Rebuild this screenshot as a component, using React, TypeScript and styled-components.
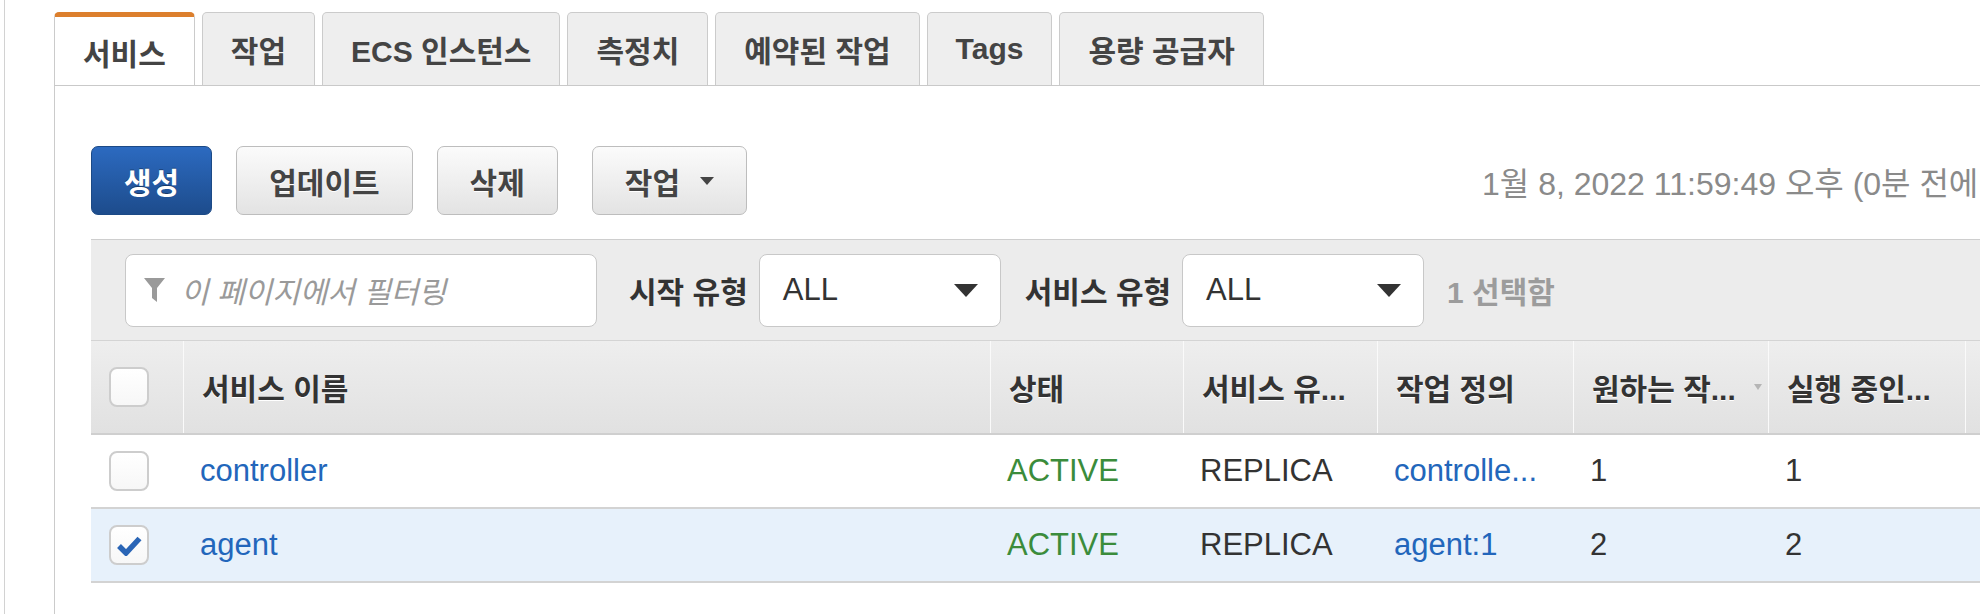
import React from "react";
import styled, { createGlobalStyle } from "styled-components";

const GlobalStyle = createGlobalStyle`
  html, body {
    margin: 0;
    padding: 0;
    background: #fff;
    overflow: hidden;
  }
  body {
    font-family: "Liberation Sans", "Noto Sans CJK KR", sans-serif;
    color: #333;
  }
  * {
    box-sizing: border-box;
  }
`;

const COLUMNS = "92px 807px 193px 194px 196px 195px 197px 240px";

const tabs = ["서비스", "작업", "ECS 인스턴스", "측정치", "예약된 작업", "Tags", "용량 공급자"];

const headers = ["서비스 이름", "상태", "서비스 유...", "작업 정의", "원하는 작...", "실행 중인...", ""];

const services = [
  { name: "controller", status: "ACTIVE", type: "REPLICA", taskDef: "controlle...", desired: 1, running: 1, selected: false },
  { name: "agent", status: "ACTIVE", type: "REPLICA", taskDef: "agent:1", desired: 2, running: 2, selected: true },
];

const FunnelIcon = () => (
  <svg width="21" height="24" viewBox="0 0 21 24">
    <path d="M0 0 H21 L13 10 V24 L8 20 V10 Z" fill="#9a9a9a" />
  </svg>
);

const Caret = ({ w, h, color }: { w: number; h: number; color: string }) => (
  <svg width={w} height={h} viewBox={`0 0 ${w} ${h}`}>
    <polygon points={`0,0 ${w},0 ${w / 2},${h}`} fill={color} />
  </svg>
);

const CheckMark = () => (
  <svg width="26" height="21" viewBox="0 0 26 21">
    <path d="M3 11 L10 18 L23.5 3.5" fill="none" stroke="#2a65b6" strokeWidth="5.5" />
  </svg>
);

const App: React.FC = () => {
  return (
    <>
      <GlobalStyle />
      <Page>
        <Frame>
          <TabBar>
            {tabs.map((t, i) => (
              <Tab key={t} $active={i === 0}>
                {t}
              </Tab>
            ))}
          </TabBar>
          <Panel>
            <Toolbar>
              <Button $primary>생성</Button>
              <Button>업데이트</Button>
              <Button>삭제</Button>
              <DropButton>
                작업
                <Caret w={14} h={8} color="#444" />
              </DropButton>
              <Timestamp>1월 8, 2022 11:59:49 오후 (0분 전에 업데이트됨)</Timestamp>
            </Toolbar>

            <FilterBar>
              <FilterInput>
                <FunnelIcon />
                <Placeholder>이 페이지에서 필터링</Placeholder>
              </FilterInput>
              <FilterLabel $gap={32}>시작 유형</FilterLabel>
              <Select>
                <span>ALL</span>
                <Caret w={24} h={13} color="#333" />
              </Select>
              <FilterLabel $gap={24}>서비스 유형</FilterLabel>
              <Select>
                <span>ALL</span>
                <Caret w={24} h={13} color="#333" />
              </Select>
              <SelectedCount>1 선택함</SelectedCount>
            </FilterBar>

            <HeaderRow>
              <HeaderCell $first>
                <Checkbox />
              </HeaderCell>
              {headers.map((h, i) => (
                <HeaderCell key={i}>
                  <HeaderLabel>{h}</HeaderLabel>
                  {i === 4 && <Caret w={8} h={6} color="#b5b5b5" />}
                </HeaderCell>
              ))}
            </HeaderRow>

            {services.map((s) => (
              <Row key={s.name} $selected={s.selected}>
                <Cell $check>
                  <Checkbox>{s.selected && <CheckMark />}</Checkbox>
                </Cell>
                <Cell $tone="link">{s.name}</Cell>
                <Cell $tone="ok">{s.status}</Cell>
                <Cell>{s.type}</Cell>
                <Cell $tone="link">{s.taskDef}</Cell>
                <Cell>{s.desired}</Cell>
                <Cell>{s.running}</Cell>
                <Cell />
              </Row>
            ))}
          </Panel>
        </Frame>
      </Page>
    </>
  );
};

const Page = styled.div`
  width: 1980px;
  height: 614px;
  padding-left: 4px;
  overflow: hidden;
`;

const Frame = styled.div`
  height: 100%;
  border-left: 1px solid #d2d2d2;
  padding-left: 49px;
  display: flex;
  flex-direction: column;
`;

const TabBar = styled.div`
  display: flex;
  align-items: flex-end;
  gap: 7px;
  height: 86px;
  padding-top: 12px;
  border-bottom: 1px solid #c9c9c9;
`;

const Tab = styled.div<{ $active?: boolean }>`
  height: 73px;
  display: flex;
  align-items: center;
  padding: 0 28px;
  padding-top: ${(p) => (p.$active ? "2px" : "0")};
  font-size: 30px;
  font-weight: 700;
  color: #444;
  white-space: nowrap;
  background: ${(p) => (p.$active ? "#fff" : "#eeeeee")};
  border: 1px solid #cbcbcb;
  border-top: ${(p) => (p.$active ? "5px solid #dc7f2d" : "1px solid #cbcbcb")};
  border-bottom: none;
  border-radius: 5px 5px 0 0;
`;

const Panel = styled.div`
  flex: 1;
  min-width: 0;
  border-left: 1px solid #cbcbcb;
  padding-left: 36px;
  overflow: hidden;
`;

const Toolbar = styled.div`
  display: flex;
  align-items: center;
  height: 69px;
  margin-top: 60px;
  margin-bottom: 24px;
  gap: 24px;
  white-space: nowrap;
`;

const Button = styled.div<{ $primary?: boolean }>`
  flex-shrink: 0;
  height: 69px;
  padding: 0 32px;
  display: flex;
  align-items: center;
  font-size: 30px;
  font-weight: 700;
  border-radius: 7px;
  color: ${(p) => (p.$primary ? "#fff" : "#444")};
  text-shadow: ${(p) => (p.$primary ? "0 -1px 0 rgba(0,0,0,0.35)" : "0 1px 0 #fff")};
  background: ${(p) =>
    p.$primary
      ? "linear-gradient(#2c6ac0, #1d4c8c)"
      : "linear-gradient(#fbfbfb, #e3e3e3)"};
  border: 1px solid ${(p) => (p.$primary ? "#1c4a86" : "#bdbdbd")};
`;

const DropButton = styled(Button)`
  gap: 20px;
  margin-left: 10px;
`;

const Timestamp = styled.div`
  flex-shrink: 0;
  margin-left: 711px;
  font-size: 32px;
  color: #8a8a8a;
`;

const FilterBar = styled.div`
  display: flex;
  align-items: center;
  height: 102px;
  padding-left: 34px;
  background: #ececec;
  border-top: 1px solid #cecece;
  border-bottom: 1px solid #d4d4d4;
  white-space: nowrap;
`;

const FilterInput = styled.div`
  flex-shrink: 0;
  width: 472px;
  height: 73px;
  display: flex;
  align-items: center;
  gap: 16px;
  padding-left: 18px;
  background: #fff;
  border: 1px solid #c8c8c8;
  border-radius: 8px;
`;

const Placeholder = styled.span`
  font-size: 30px;
  font-style: italic;
  color: #9a9a9a;
`;

const FilterLabel = styled.span<{ $gap: number }>`
  flex-shrink: 0;
  margin-left: ${(p) => p.$gap}px;
  margin-right: 11px;
  font-size: 30px;
  font-weight: 700;
  color: #333;
`;

const Select = styled.div`
  flex-shrink: 0;
  width: 242px;
  height: 73px;
  display: flex;
  align-items: center;
  justify-content: space-between;
  padding: 0 22px 0 23px;
  background: #fff;
  border: 1px solid #c8c8c8;
  border-radius: 8px;
  font-size: 31px;
  color: #333;
`;

const SelectedCount = styled.span`
  margin-left: 23px;
  font-size: 30px;
  font-weight: 700;
  color: #9c9c9c;
`;

const HeaderRow = styled.div`
  display: grid;
  grid-template-columns: ${COLUMNS};
  height: 94px;
  background: linear-gradient(#eeeeee, #e1e1e1);
  border-bottom: 2px solid #cfcfcf;
`;

const HeaderCell = styled.div<{ $first?: boolean }>`
  display: flex;
  align-items: center;
  min-width: 0;
  padding: ${(p) => (p.$first ? "0 0 0 18px" : "0 6px 0 18px")};
  border-left: ${(p) => (p.$first ? "none" : "1px solid #fafafa")};
  font-size: 30px;
  font-weight: 700;
  color: #333;
  text-shadow: 0 1px 0 #fff;
`;

const HeaderLabel = styled.span`
  flex: 1;
  min-width: 0;
  white-space: nowrap;
  overflow: hidden;
`;

const Row = styled.div<{ $selected?: boolean }>`
  display: grid;
  grid-template-columns: ${COLUMNS};
  height: 74px;
  background: ${(p) => (p.$selected ? "#e7f1fb" : "#fff")};
  border-bottom: 2px solid #d3d3d3;
`;

const toneColor = { link: "#2266bb", ok: "#3b8c3b", plain: "#333" };

const Cell = styled.div<{ $tone?: "link" | "ok" | "plain"; $check?: boolean }>`
  display: flex;
  align-items: center;
  min-width: 0;
  padding-left: ${(p) => (p.$check ? "18px" : "17px")};
  font-size: 31px;
  white-space: nowrap;
  overflow: hidden;
  color: ${(p) => toneColor[p.$tone ?? "plain"]};
`;

const Checkbox = styled.div`
  width: 40px;
  height: 40px;
  display: flex;
  align-items: center;
  justify-content: center;
  background: linear-gradient(#ffffff, #f7f7f7);
  border: 2px solid #cdcdcd;
  border-radius: 8px;
`;

export default App;
